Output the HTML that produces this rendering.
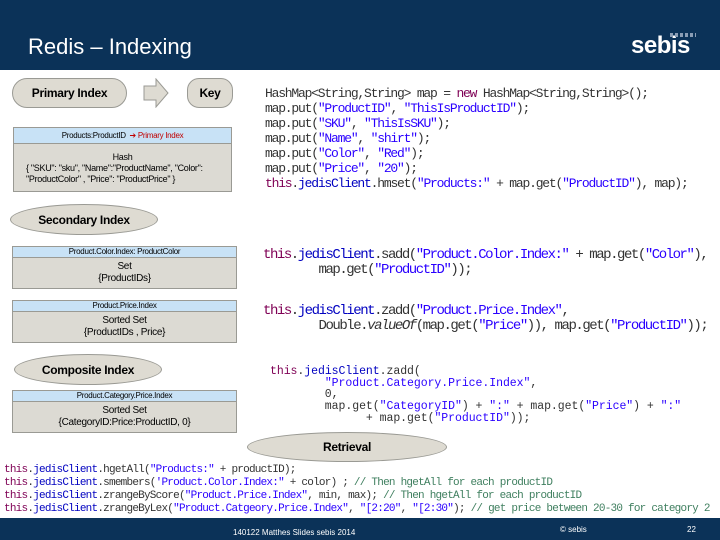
<!DOCTYPE html>
<html><head><meta charset="utf-8"><style>
*{margin:0;padding:0;box-sizing:border-box}
body{width:720px;height:540px;background:#fff;position:relative;overflow:hidden;font-family:"Liberation Sans",sans-serif;color:#000}
.a{position:absolute}
.hd{left:0;top:0;width:720px;height:70px;background:#0b3258}
.ov{position:absolute;background:#dedbd2;border:1px solid #9a9a94;display:flex;align-items:center;justify-content:center;font-weight:bold;font-size:12px;letter-spacing:-0.3px}
.bh{position:absolute;background:#c8e2f6;border:1px solid #9a9a94;font-size:8px;text-align:center;letter-spacing:-0.3px}
.bb{position:absolute;background:#dcdad3;border:1px solid #9a9a94;border-top:none;font-size:10px;text-align:center;line-height:12px;letter-spacing:-0.3px}
.code{position:absolute;font-family:"Liberation Mono",monospace;white-space:pre;color:#333}
.s{color:#2a00ff}.k{color:#7f0055}.f{color:#0000c0}.c{color:#3f7f5f}
</style></head><body>
<div class="a hd"></div>
<div class="a" style="left:28px;top:34px;color:#fff;font-size:22px">Redis – Indexing</div>
<div class="a" style="left:631px;top:32px;color:#fff;font-size:24px;font-weight:bold;letter-spacing:-0.5px">sebis</div>
<div class="a" style="left:670px;top:33px;width:26px;height:4px;background:repeating-linear-gradient(90deg,#8a9db5 0 3px,transparent 3px 5px)"></div>

<div class="ov" style="left:12px;top:78px;width:115px;height:30px;border-radius:15px">Primary Index</div>
<svg class="a" style="left:143px;top:78px" width="27" height="30"><polygon points="1,8 13,8 13,1 25,15 13,29 13,22 1,22" fill="#dedbd2" stroke="#9a9a94"/></svg>
<div class="ov" style="left:187px;top:78px;width:46px;height:30px;border-radius:12px">Key</div>
<div class="bh" style="left:13px;top:127px;width:219px;height:17px;line-height:15px">Products:ProductID &nbsp;<span style="color:#c00000">➔ Primary Index</span></div>
<div class="bb" style="left:13px;top:144px;width:219px;height:48px;padding-top:8px;font-size:9px;line-height:11px">Hash<br><span style="display:block;text-align:left;padding-left:12px">{ "SKU": "sku", "Name":"ProductName", "Color":<br>"ProductColor" , "Price": "ProductPrice" }</span></div>

<div class="ov" style="left:10px;top:204px;width:148px;height:31px;border-radius:50%">Secondary Index</div>
<div class="bh" style="left:12px;top:246px;width:225px;height:12px;line-height:10px">Product.Color.Index: ProductColor</div>
<div class="bb" style="left:12px;top:258px;width:225px;height:31px;padding-top:3px">Set<br>{ProductIDs}</div>
<div class="bh" style="left:12px;top:300px;width:225px;height:12px;line-height:10px">Product.Price.Index</div>
<div class="bb" style="left:12px;top:312px;width:225px;height:31px;padding-top:3px">Sorted Set<br>{ProductIDs , Price}</div>
<div class="ov" style="left:14px;top:354px;width:148px;height:31px;border-radius:50%">Composite Index</div>
<div class="bh" style="left:12px;top:390px;width:225px;height:12px;line-height:10px">Product.Category.Price.Index</div>
<div class="bb" style="left:12px;top:402px;width:225px;height:31px;padding-top:3px">Sorted Set<br>{CategoryID:Price:ProductID, 0}</div>
<div class="ov" style="left:247px;top:432px;width:200px;height:30px;border-radius:50%;font-size:12px">Retrieval</div>

<div class="code" style="left:265px;top:86px;font-size:13px;line-height:15px;letter-spacing:-1.2px">HashMap&lt;String,String&gt; map = <span class="k">new</span> HashMap&lt;String,String&gt;();
map.put(<span class="s">"ProductID"</span>, <span class="s">"ThisIsProductID"</span>);
map.put(<span class="s">"SKU"</span>, <span class="s">"ThisIsSKU"</span>);
map.put(<span class="s">"Name"</span>, <span class="s">"shirt"</span>);
map.put(<span class="s">"Color"</span>, <span class="s">"Red"</span>);
map.put(<span class="s">"Price"</span>, <span class="s">"20"</span>);
<span class="k">this</span>.<span class="f">jedisClient</span>.hmset(<span class="s">"Products:"</span> + map.get(<span class="s">"ProductID"</span>), map);</div>

<div class="code" style="left:263px;top:248px;font-size:14px;line-height:15px;letter-spacing:-1.46px"><span class="k">this</span>.<span class="f">jedisClient</span>.sadd(<span class="s">"Product.Color.Index:"</span> + map.get(<span class="s">"Color"</span>),
        map.get(<span class="s">"ProductID"</span>));</div>
<div class="code" style="left:263px;top:304px;font-size:14px;line-height:15px;letter-spacing:-1.46px"><span class="k">this</span>.<span class="f">jedisClient</span>.zadd(<span class="s">"Product.Price.Index"</span>,
        Double.<i>valueOf</i>(map.get(<span class="s">"Price"</span>)), map.get(<span class="s">"ProductID"</span>));</div>
<div class="code" style="left:270px;top:366px;font-size:11.5px;line-height:11.7px;letter-spacing:-0.05px"><span class="k">this</span>.<span class="f">jedisClient</span>.zadd(
        <span class="s">"Product.Category.Price.Index"</span>,
        0,
        map.get(<span class="s">"CategoryID"</span>) + <span class="s">":"</span> + map.get(<span class="s">"Price"</span>) + <span class="s">":"</span>
              + map.get(<span class="s">"ProductID"</span>));</div>

<div class="code" style="left:4px;top:464px;font-size:11px;line-height:13px;letter-spacing:-0.77px"><span class="k">this</span>.<span class="f">jedisClient</span>.hgetAll(<span class="s">"Products:"</span> + productID);
<span class="k">this</span>.<span class="f">jedisClient</span>.smembers(<span class="s">'Product.Color.Index:"</span> + color) ; <span class="c">// Then hgetAll for each productID</span>
<span class="k">this</span>.<span class="f">jedisClient</span>.zrangeByScore(<span class="s">"Product.Price.Index"</span>, min, max); <span class="c">// Then hgetAll for each productID</span>
<span class="k">this</span>.<span class="f">jedisClient</span>.zrangeByLex(<span class="s">"Product.Catgeory.Price.Index"</span>, <span class="s">"[2:20"</span>, <span class="s">"[2:30"</span>); <span class="c">// get price between 20-30 for category 2</span></div>

<div class="a" style="left:0;top:518px;width:720px;height:22px;background:#0b3258"></div>
<div class="a" style="left:233px;top:528px;color:#fff;font-size:8px">140122 Matthes Slides sebis 2014</div>
<div class="a" style="left:560px;top:525px;color:#fff;font-size:8px">© sebis</div>
<div class="a" style="left:687px;top:525px;color:#fff;font-size:8px">22</div>
</body></html>
